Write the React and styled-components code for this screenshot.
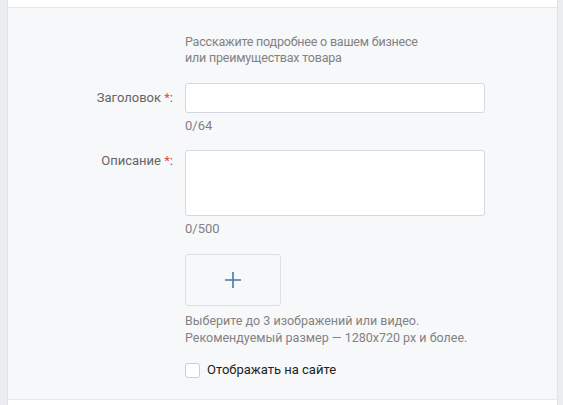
import React from "react";
import styled, { createGlobalStyle } from "styled-components";

const Global = createGlobalStyle`
  html, body { margin: 0; padding: 0; background: #ebedf0; }
  body { font-family: Roboto, "Open Sans", Arial, sans-serif; font-size: 12.5px; }
  * { box-sizing: border-box; }
`;

const Page = styled.div`
  width: 563px;
  height: 405px;
  padding: 0 5px 0 7px;
  background: #ebedf0;
`;

const Card = styled.div`
  height: 100%;
  background: #fff;
  border-left: 1px solid #e3e4e8;
  border-right: 1px solid #e3e4e8;
  padding-top: 7px;
`;

const Section = styled.div`
  background: #f7f8fa;
  border-top: 1px solid #e7e8ec;
  border-bottom: 1px solid #e7e8ec;
  padding: 26px 0 21px;
  display: flex;
  flex-direction: column;
`;

const Row = styled.div`
  display: grid;
  grid-template-columns: 165px 300px;
  column-gap: 12px;
  margin-top: ${(p) => p.$mt || 0}px;
`;

const Label = styled.div`
  text-align: right;
  color: #656565;
  font-size: 13px;
  line-height: 16px;
  padding-top: ${(p) => p.$pt || 0}px;
`;

const Star = styled.span`
  color: #e64646;
`;

const Field = styled.div`
  display: flex;
  flex-direction: column;
  align-items: flex-start;
`;

const Hint = styled.div`
  color: #828282;
  line-height: ${(p) => p.$lh || 16}px;
  margin-top: ${(p) => p.$mt || 0}px;
  letter-spacing: ${(p) => p.$ls || 0}px;
`;

const Input = styled.div`
  width: 300px;
  height: ${(p) => p.$h}px;
  background: #fff;
  border: 1px solid #d3d9de;
  border-radius: 3px;
`;

const Counter = styled.div`
  color: #828282;
  font-size: 13px;
  line-height: 16px;
  margin-top: 5px;
`;

const Upload = styled.div`
  width: 96px;
  height: 52px;
  border: 1px solid #dce1e6;
  border-radius: 3px;
  background: #f7f8fa;
  display: flex;
  align-items: center;
  justify-content: center;
`;

const CheckRow = styled.label`
  display: flex;
  align-items: center;
  gap: 7px;
  color: #222;
  font-size: 13px;
  line-height: 16px;
`;

const Box = styled.span`
  width: 15px;
  height: 15px;
  border: 1px solid #c5d0db;
  border-radius: 3px;
  background: #fff;
`;

export default function App() {
  return (
    <>
      <Global />
      <Page>
        <Card>
          <Section>
            <Row>
              <div />
              <Hint $ls={-0.2}>
                Расскажите подробнее о вашем бизнесе
                <br />
                или преимуществах товара
              </Hint>
            </Row>
            <Row $mt={17}>
              <Label $pt={7}>
                Заголовок <Star>*</Star>:
              </Label>
              <Field>
                <Input $h={30} />
                <Counter>0/64</Counter>
              </Field>
            </Row>
            <Row $mt={16}>
              <Label $pt={3}>
                Описание <Star>*</Star>:
              </Label>
              <Field>
                <Input $h={66} />
                <Counter>0/500</Counter>
              </Field>
            </Row>
            <Row $mt={17}>
              <div />
              <Field>
                <Upload>
                  <svg width="18" height="18" viewBox="0 0 18 18">
                    <path d="M9 1v16M1 9h16" stroke="#4a76a8" strokeWidth="1.6" fill="none" />
                  </svg>
                </Upload>
                <Hint $lh={17} $mt={6}>
                  Выберите до 3 изображений или видео.
                  <br />
                  Рекомендуемый размер — 1280x720 px и более.
                </Hint>
              </Field>
            </Row>
            <Row $mt={16}>
              <div />
              <CheckRow>
                <Box />
                Отображать на сайте
              </CheckRow>
            </Row>
          </Section>
        </Card>
      </Page>
    </>
  );
}
